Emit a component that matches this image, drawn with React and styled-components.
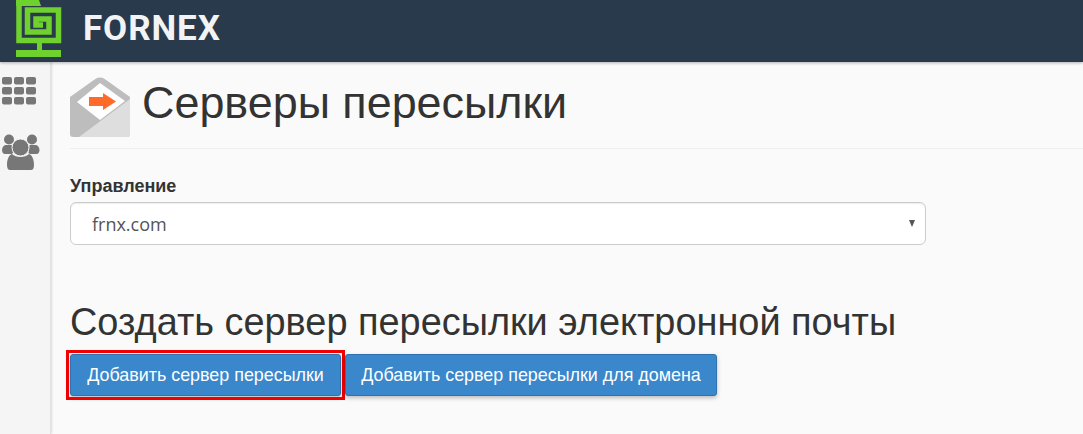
import React from 'react';
import styled, { createGlobalStyle } from 'styled-components';

const GlobalStyle = createGlobalStyle`
  html, body {
    margin: 0;
    padding: 0;
    height: 100%;
    overflow: hidden;
    background: #fafafa;
    font-family: "Liberation Sans", Arial, sans-serif;
    color: #333;
  }
`;

const Page = styled.div`
  width: 1083px;
  height: 434px;
  display: flex;
  flex-direction: column;
  overflow: hidden;
`;

const TopBar = styled.header`
  height: 62px;
  flex: none;
  display: flex;
  align-items: flex-start;
  gap: 21px;
  padding-left: 16px;
  background: #293a4c;
  box-shadow: 0 1px 3px rgba(0, 0, 0, 0.3);
  position: relative;
  z-index: 2;
`;

const Brand = styled.span`
  font-family: "Roboto", "Liberation Sans", sans-serif;
  font-size: 35px;
  line-height: 58px;
  font-weight: 700;
  letter-spacing: 0.9px;
  color: #f2f3f4;
`;

const Body = styled.div`
  flex: 1;
  display: flex;
  min-height: 0;
`;

const SideBar = styled.nav`
  width: 51px;
  flex: none;
  display: flex;
  flex-direction: column;
  align-items: flex-start;
  gap: 29px;
  padding: 15px 0 0 2px;
  box-sizing: border-box;
  background: #f5f5f5;
  border-right: 1px solid #e2e2e2;
  box-shadow: 1px 0 2px rgba(0, 0, 0, 0.12);
`;

const Content = styled.main`
  flex: 1;
  padding: 15px 0 0 19px;
`;

const TitleRow = styled.div`
  display: flex;
  align-items: flex-start;
  gap: 12px;
  height: 71px;
  border-bottom: 1px solid #eeeeee;
`;

const Title = styled.h1`
  margin: 0;
  font-size: 44.9px;
  line-height: 52px;
  font-weight: 400;
  color: #333;
`;

const Label = styled.label`
  display: block;
  margin-top: 27px;
  font-size: 18px;
  line-height: 20px;
  font-weight: 700;
  color: #333;
`;

const SelectBox = styled.div`
  width: 856px;
  height: 43px;
  margin-top: 6px;
  box-sizing: border-box;
  display: flex;
  align-items: center;
  justify-content: space-between;
  padding: 0 10px 0 21px;
  background: #fff;
  border: 1px solid #cccccc;
  border-radius: 6px;
  box-shadow: inset 0 1px 1px rgba(0, 0, 0, 0.075);
  font-family: "Open Sans", sans-serif;
  font-size: 18px;
  color: #555;
`;

const Caret = styled.span`
  width: 0;
  height: 0;
  border-left: 3.5px solid transparent;
  border-right: 3.5px solid transparent;
  border-top: 7px solid #555;
`;

const Heading = styled.h2`
  margin: 55px 0 0;
  font-size: 37.9px;
  line-height: 44px;
  font-weight: 400;
  color: #333;
`;

const ButtonRow = styled.div`
  display: flex;
  gap: 4px;
  margin-top: 10px;
`;

const Button = styled.button`
  height: 42px;
  width: ${(p) => p.$width}px;
  padding: 0;
  font-family: inherit;
  font-size: 17.9px;
  color: #fff;
  background: #3a87cb;
  border: 1px solid #2f72ae;
  border-radius: 3px;
  box-shadow: 0 2px 4px rgba(0, 0, 0, 0.25);
  position: relative;

  /* red annotation frame drawn over the screenshot */
  &::after {
    content: '';
    display: ${(p) => (p.$marked ? 'block' : 'none')};
    position: absolute;
    inset: -5px;
    border: 3px solid #f00000;
  }
`;

const Logo = () => (
  <svg width="46" height="58" viewBox="0 0 46 58" style={{ flex: 'none' }}>
    <g fill="none" stroke="#6fd12e" strokeWidth="5.5">
      <path d="M3 0V40.500H42.500V10H11.500V32H33V19H20V25H27" />
    </g>
    <path d="M0 0H23L25 6H0Z" fill="#6fd12e" />
    <path d="M21 43H26V50H45V57H0V50H21Z" fill="#6fd12e" />
  </svg>
);

const AppsIcon = () => (
  <svg width="34" height="28" viewBox="0 0 34 28" fill="#777">
    {[0, 10, 20].map((y) =>
      [0, 12, 24].map((x) => <rect key={`${x}-${y}`} x={x} y={y} width="10" height="7.5" rx="2" />)
    )}
  </svg>
);

const UsersIcon = () => (
  <svg width="38" height="37" viewBox="0 0 38 37" fill="#777">
    <circle cx="7" cy="5.500" r="5" />
    <circle cx="30" cy="5.500" r="5" />
    <path d="M0 16c0-3 2-5 4-5h6l1 8c-1 1-1.500 1-3 1H3c-2 0-3-2-3-4z" />
    <path d="M37.500 16c0-3-2-5-4-5h-6l-1 8c1 1 1.500 1 3 1h5c2 0 3-2 3-4z" />
    <circle cx="18.500" cy="13.500" r="8.500" stroke="#f5f5f5" strokeWidth="1" />
    <path d="M5 31c0-6 2-10 5-11 2 2 5 3 8.500 3s6.500-1 8.500-3c3 1 5 5 5 11 0 3-1 5-3 5H8c-2 0-3-2-3-5z" />
  </svg>
);

const MailIcon = () => (
  <svg width="60" height="60" viewBox="0 0 60 60" style={{ flex: 'none' }}>
    <path d="M0 20L26 1.500C28.500 0 31.500 0 34 1.500L60 20V57C60 59 59 60 57 60H3C1 60 0 59 0 57Z" fill="#bdbdbd" />
    <path d="M30 6L55 24 30 43 7 25Z" fill="#fff" />
    <path d="M60 22V57C60 59 59 60 57 60H9L60 22Z" fill="#dedede" />
    <path d="M19 20H33V16L46 24.500 33 33V29H19Z" fill="#ff6a2b" />
  </svg>
);

const App = () => (
  <Page>
    <GlobalStyle />
    <TopBar>
      <Logo />
      <Brand>FORNEX</Brand>
    </TopBar>
    <Body>
      <SideBar>
        <AppsIcon />
        <UsersIcon />
      </SideBar>
      <Content>
        <TitleRow>
          <MailIcon />
          <Title>Серверы пересылки</Title>
        </TitleRow>
        <Label>Управление</Label>
        <SelectBox>
          frnx.com
          <Caret />
        </SelectBox>
        <Heading>Создать сервер пересылки электронной почты</Heading>
        <ButtonRow>
          <Button $width={271} $marked>Добавить сервер пересылки</Button>
          <Button $width={372}>Добавить сервер пересылки для домена</Button>
        </ButtonRow>
      </Content>
    </Body>
  </Page>
);

export default App;
